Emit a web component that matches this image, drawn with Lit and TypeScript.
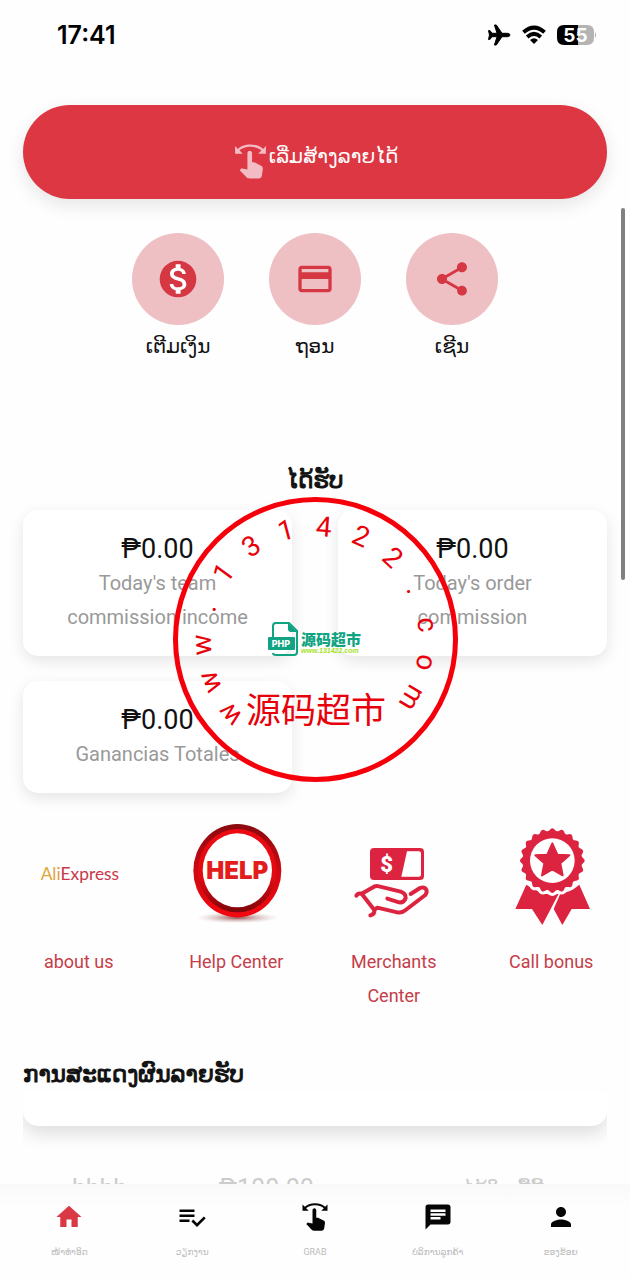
import { LitElement, html, css, svg } from "lit";
import { customElement } from "lit/decorators.js";

const SWIPE =
  "M18.89 14.75l-4.09-2.04c-.28-.14-.58-.21-.89-.21H13v-6c0-.83-.67-1.5-1.5-1.5S10 5.67 10 6.5v10.74l-3.25-.74c-.33-.07-.68.03-.92.28L5 17.62l4.54 4.79c.38.38 1.14.59 1.67.59h6.16c1 0 1.84-.73 1.98-1.72l.63-4.46c.12-.85-.32-1.68-1.09-2.07zM20.13 3.87C18.69 2.17 15.6 1 12 1S5.31 2.17 3.87 3.87L2 2v5h5L4.93 4.93c1-1.29 3.7-2.43 7.07-2.43s6.07 1.14 7.07 2.43L17 7h5V2l-1.87 1.87z";

const ACTIONS = [
  {
    label: "ເຕີມເງິນ",
    size: 44,
    path: "M12 2C6.48 2 2 6.48 2 12s4.48 10 10 10 10-4.48 10-10S17.52 2 12 2z",
    cut: "M13.41 18.09V20h-2.67v-1.93c-1.71-.36-3.16-1.46-3.27-3.4h1.96c.1 1.05.82 1.87 2.65 1.87 1.96 0 2.4-.98 2.4-1.59 0-.83-.44-1.61-2.67-2.14-2.48-.6-4.18-1.62-4.18-3.67 0-1.72 1.39-2.84 3.11-3.21V4h2.67v1.95c1.86.45 2.79 1.86 2.85 3.39H14.3c-.05-1.11-.64-1.87-2.22-1.87-1.5 0-2.4.68-2.4 1.64 0 .84.65 1.39 2.67 1.91s4.18 1.39 4.18 3.91c-.01 1.83-1.38 2.83-3.12 3.16z",
  },
  {
    label: "ຖອນ",
    size: 40,
    path: "M20 4H4c-1.11 0-1.99.89-1.99 2L2 18c0 1.11.89 2 2 2h16c1.11 0 2-.89 2-2V6c0-1.11-.89-2-2-2zm0 14H4v-6h16v6zm0-10H4V6h16v2z",
    cut: "",
  },
  {
    label: "ເຊີນ",
    size: 40,
    path: "M18 16.08c-.76 0-1.44.3-1.96.77L8.91 12.7c.05-.23.09-.46.09-.7s-.04-.47-.09-.7l7.05-4.11c.54.5 1.25.81 2.04.81 1.66 0 3-1.34 3-3s-1.34-3-3-3-3 1.34-3 3c0 .24.04.47.09.7L8.04 9.81C7.5 9.31 6.79 9 6 9c-1.66 0-3 1.34-3 3s1.34 3 3 3c.79 0 1.5-.31 2.04-.81l7.12 4.16c-.05.21-.08.43-.08.65 0 1.61 1.31 2.92 2.92 2.92 1.61 0 2.92-1.31 2.92-2.92s-1.31-2.92-2.92-2.92z",
    cut: "",
  },
];

const INCOME = [
  { amount: "₱0.00", label: "Today's team commission income" },
  { amount: "₱0.00", label: "Today's order commission" },
  { amount: "₱0.00", label: "Ganancias Totales" },
];

const TABS = [
  { label: "ໜ້າທຳອິດ", path: "M10 20v-6h4v6h5v-8h3L12 3 2 12h3v8z", active: true },
  {
    label: "ວຽກງານ",
    path: "M14 10H2v2h12v-2zm0-4H2v2h12V6zM2 16h8v-2H2v2zm19.5-4.5L23 13l-6.99 7-4.51-4.5L13 14l3.01 3 5.49-5.5z",
    active: false,
  },
  { label: "GRAB", path: SWIPE, active: false },
  {
    label: "ບໍລິການລູກຄ້າ",
    path: "M20 2H4c-1.1 0-1.99.9-1.99 2L2 22l4-4h14c1.1 0 2-.9 2-2V4c0-1.1-.9-2-2-2zm-6 12H6v-2h8v2zm4-3H6V9h12v2zm0-3H6V6h12v2z",
    active: false,
  },
  {
    label: "ຂອງຂ້ອຍ",
    path: "M12 12c2.21 0 4-1.79 4-4s-1.79-4-4-4-4 1.79-4 4 1.79 4 4 4zm0 2c-2.67 0-8 1.34-8 4v2h16v-2c0-2.66-5.33-4-8-4z",
    active: false,
  },
];

const SEAL = "www.131422.com".split("");
const SEAL_STEP = 19.4;
const SEAL_START = -131.3;

/** Closed outline of a rosette with rounded scallops. */
function rosette(cx: number, cy: number, r: number, depth: number, lobes: number): string {
  const points: string[] = [];
  for (let i = 0; i < lobes * 12; i++) {
    const a = (i / (lobes * 12)) * Math.PI * 2;
    const rr = r + depth * Math.cos(a * lobes);
    points.push(`${(cx + rr * Math.sin(a)).toFixed(1)} ${(cy - rr * Math.cos(a)).toFixed(1)}`);
  }
  return `M${points.join("L")}Z`;
}

const aliexpress = svg`
  <svg class="picture" viewBox="90 45 288 300" aria-hidden="true">
    <defs>
      <linearGradient id="ali" x1="0" x2="1">
        <stop offset="0" stop-color="#e0a83c" />
        <stop offset="1" stop-color="#d8803c" />
      </linearGradient>
    </defs>
    <text class="brand" x="119" y="209"><tspan fill="url(#ali)">Ali</tspan><tspan fill="#c8384a">Express</tspan></text>
  </svg>`;

const help = svg`
  <svg class="picture" viewBox="564 45 288 300" aria-hidden="true">
    <defs>
      <radialGradient id="shade">
        <stop offset="0" stop-color="#7a2020" stop-opacity="0.8" />
        <stop offset="1" stop-color="#d0b0b0" stop-opacity="0" />
      </radialGradient>
      <linearGradient id="rim" x1="0" y1="0" x2="0" y2="1">
        <stop offset="0" stop-color="#8a0a10" />
        <stop offset="0.5" stop-color="#d00810" />
        <stop offset="1" stop-color="#f40810" />
      </linearGradient>
      <linearGradient id="bevel" x1="0" y1="0" x2="0" y2="1">
        <stop offset="0" stop-color="#ee0a12" />
        <stop offset="0.6" stop-color="#e00a12" />
        <stop offset="1" stop-color="#7c060a" />
      </linearGradient>
    </defs>
    <ellipse cx="712" cy="323" rx="124" ry="17" fill="url(#shade)" />
    <ellipse cx="712" cy="182" rx="132" ry="140" fill="url(#rim)" />
    <ellipse cx="712" cy="182" rx="118" ry="125" fill="url(#bevel)" />
    <ellipse cx="712" cy="181" rx="104" ry="111" fill="#fff" />
    <text class="help" x="712" y="206" text-anchor="middle">HELP</text>
  </svg>`;

const merchants = svg`
  <svg class="picture" viewBox="90 45 288 300" aria-hidden="true">
    <rect x="162" y="114" width="162" height="96" rx="12" fill="#dc2440" />
    <path d="M273 124H309Q315 124 315 130V194Q315 200 309 200H256Z" fill="#fff" />
    <text class="dollar" x="212" y="185" text-anchor="middle">$</text>
    <g fill="none" stroke="#dc2440" stroke-width="12" stroke-linecap="round" stroke-linejoin="round">
      <path d="M121 257Q126 248 137 251L175 300Q177 312 163 316" />
      <path d="M137 251L174 230Q181 227 189 229L254 245Q270 251 269 264Q264 279 249 277L214 266" />
      <path d="M284 252L312 234Q325 229 331 239Q334 248 328 255L269 300Q257 310 244 307L184 293L174 299" />
    </g>
  </svg>`;

const award = svg`
  <svg class="picture" viewBox="564 45 288 300" aria-hidden="true">
    <g fill="#dc2440">
      <path d="M634 224L601 297L651 297L682 345L731 251Q690 262 634 224Z" />
      <path d="M736 251L716 297L742 345L770 297L825 297L793 224Q768 246 736 251Z" />
      <path d="${rosette(712, 152, 93, 4, 20)}" stroke="#fff" stroke-width="18" paint-order="stroke" />
      <circle cx="712" cy="152" r="67" fill="#fff" />
      <path d="M712 100L727 134L763 136L736 160L743 196L712 178L681 196L688 160L661 136L697 134Z"
        stroke="#dc2440" stroke-width="6" stroke-linejoin="round" />
    </g>
  </svg>`;

const SERVICES = [
  { label: "about us", picture: aliexpress },
  { label: "Help Center", picture: help },
  { label: "Merchants Center", picture: merchants },
  { label: "Call bonus", picture: award },
];

@customElement("app-root")
export class AppRoot extends LitElement {
  static styles = css`
    :host {
      display: flex;
      flex-direction: column;
      position: relative;
      height: 100vh;
      overflow: hidden;
      background: #fefefe;
      color: #111;
      font-family: Roboto, "DejaVu Sans", "Noto Sans CJK SC", sans-serif;
    }
    * {
      box-sizing: border-box;
    }
    button {
      font: inherit;
      border: 0;
      cursor: pointer;
    }
    a {
      color: inherit;
      text-decoration: none;
    }
    h2 {
      margin: 0;
      font-size: 23px;
      line-height: 34px;
      font-weight: 400;
      -webkit-text-stroke: 1px #111;
    }
    .status {
      display: flex;
      justify-content: space-between;
      align-items: center;
      flex: none;
      height: 69px;
      padding: 0 33px 0 57px;
    }
    .time {
      font: 600 25px/30px Inter, sans-serif;
      color: #000;
    }
    .indicators {
      display: flex;
      align-items: center;
      gap: 11px;
    }
    .battery-text {
      font: 700 19px Inter, sans-serif;
      fill: #fff;
    }
    main {
      flex: 1;
      min-height: 0;
      overflow: hidden;
      padding-top: 36px;
    }
    .start {
      display: flex;
      justify-content: center;
      align-items: center;
      width: calc(100% - 46px);
      height: 94px;
      margin: 0 23px;
      padding: 8px 0 0;
      border-radius: 47px;
      background: #dc3743;
      color: #fff;
      font-size: 20px;
      box-shadow: 0 6px 18px rgba(0, 0, 0, 0.1);
    }
    .start-icon {
      width: 37px;
      height: 37px;
      margin-top: 10px;
      fill: #f3bcc4;
    }
    .actions {
      display: flex;
      justify-content: center;
      gap: 45px;
      margin-top: 34px;
    }
    .action {
      display: flex;
      flex-direction: column;
      align-items: center;
      gap: 4px;
      width: 92px;
      padding: 0;
      background: none;
      color: #111;
      font-size: 20px;
      line-height: 34px;
    }
    .disc {
      display: grid;
      place-items: center;
      width: 92px;
      height: 92px;
      border-radius: 50%;
      background: #eec0c4;
      fill: #d63843;
    }
    .cut {
      fill: #fff;
    }
    .earned {
      margin-top: 101px;
      text-align: center;
    }
    .cards {
      display: grid;
      grid-template-columns: 1fr 1fr;
      gap: 25px 46px;
      margin-top: 12px;
      padding: 0 23px;
    }
    .card {
      padding: 22px 30px;
      border-radius: 15px;
      background: #fff;
      text-align: center;
      line-height: 34px;
      box-shadow: 0 5px 15px rgba(0, 0, 0, 0.1);
    }
    .amount {
      font-size: 27px;
    }
    .caption {
      font-size: 20px;
      color: #999;
    }
    .services {
      display: grid;
      grid-template-columns: repeat(4, 1fr);
      margin-top: 32px;
    }
    .service {
      display: flex;
      flex-direction: column;
      align-items: center;
      gap: 20px;
      padding: 0 23px;
      color: #c53d49;
      font-size: 18px;
      line-height: 34px;
      text-align: center;
    }
    .picture {
      width: 96px;
      height: 100px;
      overflow: visible;
    }
    .brand {
      font: 400 52px Lato, sans-serif;
    }
    .help {
      font: 900 72px Inter, sans-serif;
      fill: #e31c1c;
    }
    .dollar {
      font: 900 66px Roboto, sans-serif;
      fill: #fff;
    }
    .feed-title {
      margin: 45px 23px 0;
    }
    .feed {
      margin: 0 23px;
      overflow: hidden;
    }
    .feed-end {
      height: 34px;
      border-radius: 0 0 15px 15px;
      background: #fff;
      box-shadow: 0 8px 18px rgba(0, 0, 0, 0.13);
    }
    .feed-row {
      display: grid;
      grid-template-columns: 11fr 13fr 18fr;
      margin-top: 24px;
      padding: 22px 0;
      border-radius: 15px;
      font-size: 25px;
      line-height: 34px;
      text-align: center;
      color: #ccc;
    }
    .feed-note {
      font-size: 20px;
      padding-left: 44px;
    }
    .tabs {
      display: grid;
      grid-template-columns: repeat(5, 1fr);
      flex: none;
      padding: 16px 8px 20px;
      background: linear-gradient(#f9f9f9, #fefefe 24px);
      z-index: 1;
    }
    .tab {
      display: flex;
      flex-direction: column;
      align-items: center;
      gap: 11px;
      color: #bbb;
      font-size: 9px;
      line-height: 14px;
      fill: #050505;
    }
    .tab-icon {
      width: 30px;
      height: 34px;
    }
    .current {
      fill: #d93844;
    }
    .scroll {
      position: absolute;
      top: 208px;
      right: 5px;
      width: 4px;
      height: 372px;
      border-radius: 2px;
      background: #808080;
    }
    .seal {
      position: absolute;
      top: 497px;
      left: 50%;
      width: 286px;
      height: 286px;
      transform: translateX(-50%);
      pointer-events: none;
      z-index: 2;
    }
    .seal-letter {
      font: 400 28px Roboto, sans-serif;
      fill: #e8000a;
    }
    .seal-name {
      font: 400 35px "Noto Sans CJK SC", sans-serif;
      fill: #e8000a;
    }
    .logo-name {
      font: 900 15px "Noto Sans CJK SC", sans-serif;
      fill: #10a482;
    }
    .logo-url {
      font: italic 700 7px "Liberation Sans", sans-serif;
      fill: #a6e22a;
    }
    .logo-php {
      font: 800 9px Inter, sans-serif;
      fill: #fff;
    }
  `;

  render() {
    return html`
      <header class="status">
        <span class="time">17:41</span>
        <div class="indicators">
          <svg width="24" height="24" viewBox="0 0 24 24" role="img" aria-label="Airplane mode">
            <path
              stroke="#000"
              stroke-linejoin="round"
              d="M23 12c0-1-1.300-1.700-3-1.700h-5L9.300 2H7.400l2.700 8.300H5L3 7.600H1.500L2.500 12l-1 4.400H3l2-2.700h5.100L7.400 22h1.900l5.700-8.300h5c1.700 0 3-.7 3-1.700z"
            />
          </svg>
          <svg width="24" height="20" viewBox="0 0 24 20" role="img" aria-label="Wi-Fi">
            <g fill="none" stroke="#000" stroke-width="4">
              <path d="M1.500 7.300Q12-2 22.500 7.300" />
              <path d="M5.200 11.900Q12 6 18.800 11.900" />
            </g>
            <path d="M8 15Q12 11.500 16 15L12 19Z" />
          </svg>
          <svg width="40" height="24" viewBox="0 0 40 24" role="img" aria-label="Battery">
            <path d="M7 2H21V22H7Q0 22 0 15V9Q0 2 7 2Z" />
            <path d="M21 2H30Q37 2 37 9V15Q37 22 30 22H21Z" fill="#b4b4b4" />
            <path d="M38 9Q40 12 38 15Z" fill="#a8a8a8" />
            <text class="battery-text" x="18.500" y="19" text-anchor="middle">55</text>
          </svg>
        </div>
      </header>

      <main>
        <button class="start">
          <svg class="start-icon" viewBox="0 0 24 24" aria-hidden="true"><path d=${SWIPE} /></svg>
          <span>ເລີ່ມສ້າງລາຍໄດ້</span>
        </button>

        <div class="actions">
          ${ACTIONS.map(
            (a) => html`
              <button class="action">
                <span class="disc">
                  <svg width=${a.size} height=${a.size} viewBox="0 0 24 24" aria-hidden="true">
                    <path d=${a.path} />
                    <path class="cut" d=${a.cut} />
                  </svg>
                </span>
                <span>${a.label}</span>
              </button>
            `,
          )}
        </div>

        <h2 class="earned">ໄດ້ຮັບ</h2>
        <section class="cards">
          ${INCOME.map(
            (c) => html`
              <div class="card">
                <div class="amount">${c.amount}</div>
                <div class="caption">${c.label}</div>
              </div>
            `,
          )}
        </section>

        <nav class="services">
          ${SERVICES.map((s) => html`<a class="service" href="#">${s.picture}<span>${s.label}</span></a>`)}
        </nav>

        <h2 class="feed-title">ການສະແດງຜົນລາຍຮັບ</h2>
        <section class="feed">
          <div class="feed-end"></div>
          <div class="feed-row">
            <span>hhhh</span>
            <span>₱100.00</span>
            <span class="feed-note">ໄດ້ໃນ ມື້ນີ້</span>
          </div>
        </section>
      </main>

      <nav class="tabs">
        ${TABS.map(
          (t) => html`
            <a class="tab ${t.active ? "current" : ""}" href="#">
              <svg class="tab-icon" viewBox="0 0 24 24" aria-hidden="true"><path d=${t.path} /></svg>
              <span>${t.label}</span>
            </a>
          `,
        )}
      </nav>

      <div class="scroll"></div>

      <svg class="seal" viewBox="0 0 286 286" role="img" aria-label="源码超市">
        <circle cx="143.500" cy="142.500" r="140" fill="none" stroke="#f5000a" stroke-width="5" />
        ${SEAL.map(
          (ch, i) => svg`<text class="seal-letter" text-anchor="middle" x="143" y="39"
            transform="rotate(${SEAL_START + i * SEAL_STEP} 143 143)">${ch}</text>`,
        )}
        <text class="seal-name" x="144" y="226" text-anchor="middle">源码超市</text>
        <g fill="none" stroke="#10a482" stroke-width="2">
          <path d="M101 140V129Q101 126 104 126H117L125 134V155Q125 158 122 158H104Q101 158 101 156" />
        </g>
        <path d="M116 126L125 135H119Q116 135 116 132Z" fill="#10a482" />
        <rect x="96" y="140" width="27" height="13" rx="1" fill="#10a482" />
        <text class="logo-php" x="109" y="150" text-anchor="middle">PHP</text>
        <text class="logo-name" x="129" y="148">源码超市</text>
        <text class="logo-url" x="129" y="156">www.131422.com</text>
      </svg>
    `;
  }
}
